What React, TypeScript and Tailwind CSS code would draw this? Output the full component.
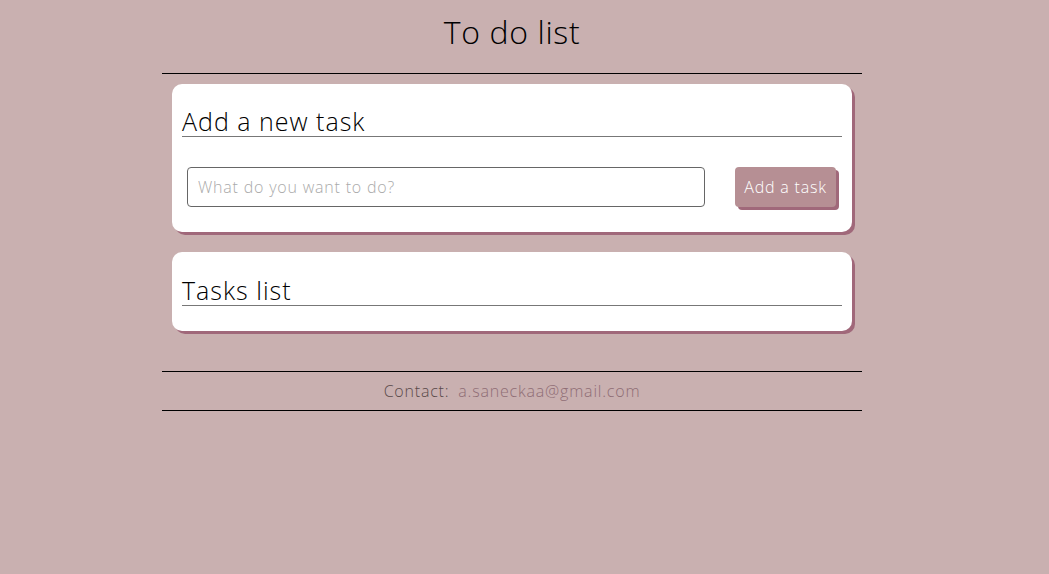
export default function App() {
  return (
    <div className="min-h-[574px] bg-[#c9b0b0] font-['Open_Sans',sans-serif] font-light text-black">
      <div className="ml-[162px] w-[700px]">
        <header className="border-b border-black pt-[10px] pb-[20px] text-center">
          <h1 className="text-[32px] leading-[43px] font-light tracking-[0.02em]">To do list</h1>
        </header>

        <main className="py-[10px]">
          <section className="mx-[10px] rounded-[10px] bg-white px-[10px] pb-[25px] shadow-[3px_3px_0_#a0687a]">
            <h2 className="border-b border-[#777] pt-[22px] text-[25px] leading-[30px] tracking-[0.04em]">Add a new task</h2>
            <form className="mt-[30px] flex items-center gap-[30px] pl-[5px] pr-[6px]">
              <input
                className="h-[40px] flex-1 rounded-[4px] border border-[#666] px-[10px] text-[16px] tracking-[0.05em] placeholder:text-[#aaa] outline-none"
                placeholder="What do you want to do?"
              />
              <button
                type="button"
                className="h-[40px] w-[101px] rounded-[4px] bg-[#b68f94] text-[16px] tracking-[0.05em] text-white shadow-[3px_3px_0_#a0687a]"
              >
                Add a task
              </button>
            </form>
          </section>

          <section className="mx-[10px] mt-[20px] rounded-[10px] bg-white px-[10px] pb-[25px] shadow-[3px_3px_0_#a0687a]">
            <h2 className="border-b border-[#777] pt-[24px] text-[25px] leading-[29px] tracking-[0.04em]">Tasks list</h2>
          </section>
        </main>

        <footer className="mt-[30px] border-y border-black py-[8px] text-center text-[16px] leading-[22px] tracking-[0.05em]">
          <span className="text-[#5a4a4a]">Contact: </span>
          <a href="#" className="ml-[4px] text-[#8f6d75]">a.saneckaa@gmail.com</a>
        </footer>
      </div>
    </div>
  );
}
